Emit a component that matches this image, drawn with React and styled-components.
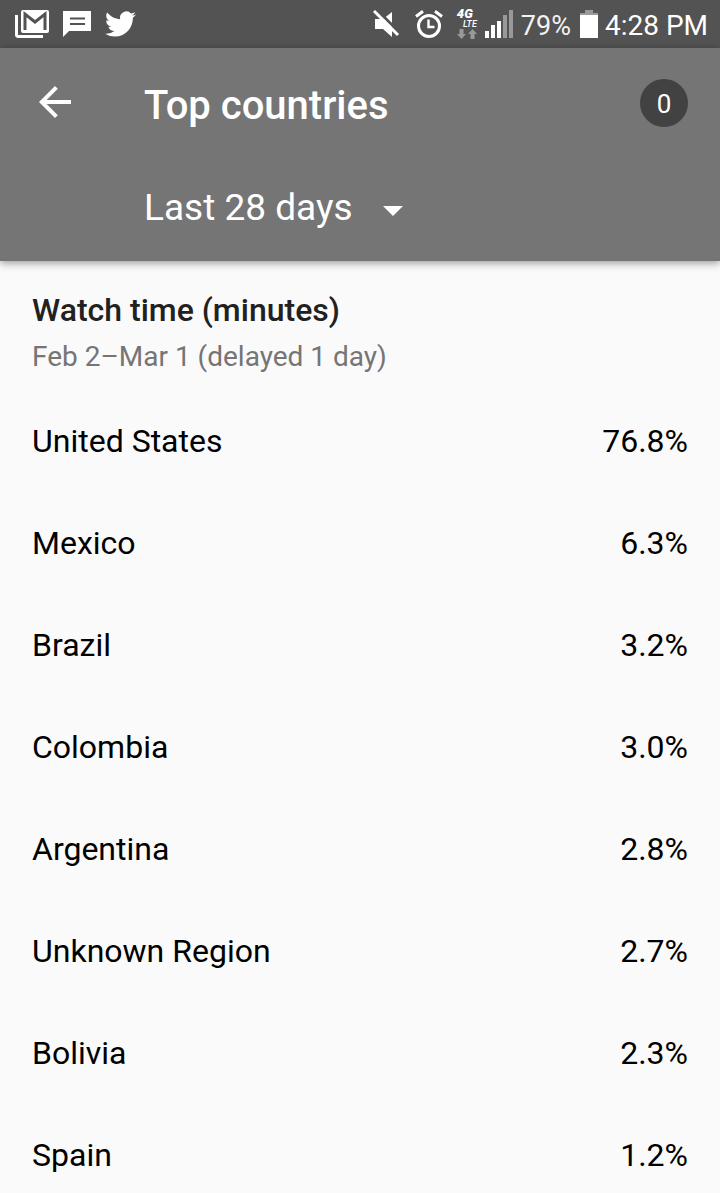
import React from 'react';
import styled, { createGlobalStyle } from 'styled-components'

const countries = [
    { name: 'United States', share: '76.8%' },
    { name: 'Mexico', share: '6.3%' },
    { name: 'Brazil', share: '3.2%' },
    { name: 'Colombia', share: '3.0%' },
    { name: 'Argentina', share: '2.8%' },
    { name: 'Unknown Region', share: '2.7%' },
    { name: 'Bolivia', share: '2.3%' },
    { name: 'Spain', share: '1.2%' },
]

const GmailIcon = () => (
    <svg width="34" height="28" viewBox="0 0 34 28">
        <path d="M1.5 5v20a1.5 1.5 0 0 0 1.5 1.5h25" fill="none" stroke="#fff" strokeWidth="3" />
        <rect x="6" y="0" width="28" height="23" rx="2" fill="#fff" />
        <path d="M10 20V4l10 8 10-8v16" fill="none" stroke="#535353" strokeWidth="3" />
    </svg>
)

const MessageIcon = () => (
    <svg width="28" height="26" viewBox="0 0 28 26">
        <path d="M0 0h28v20H6l-6 6z" fill="#fff" />
        <path d="M7 7.500h15M7 13h15" stroke="#535353" strokeWidth="2" />
    </svg>
)

const TwitterIcon = () => (
    <svg width="31" height="26" viewBox="0 2 24 20" fill="#fff">
        <path d="M23.953 4.57a10 10 0 01-2.825.775 4.958 4.958 0 002.163-2.723c-.951.555-2.005.959-3.127 1.184a4.92 4.92 0 00-8.384 4.482C7.69 8.095 4.067 6.13 1.64 3.162a4.822 4.822 0 00-.666 2.475c0 1.71.87 3.213 2.188 4.096a4.904 4.904 0 01-2.228-.616v.06a4.923 4.923 0 003.946 4.827 4.996 4.996 0 01-2.212.085 4.936 4.936 0 004.604 3.417 9.867 9.867 0 01-6.102 2.105c-.39 0-.779-.023-1.17-.067a13.995 13.995 0 007.557 2.209c9.053 0 13.998-7.496 13.998-13.985 0-.21 0-.42-.015-.63A9.935 9.935 0 0024 4.59z" />
    </svg>
)

const MuteIcon = () => (
    <svg width="28" height="28" viewBox="0 0 28 28">
        <path d="M2 9h8l9-7v25l-9-8H2z" fill="#fff" />
        <path d="M3 -1L28 24" stroke="#535353" strokeWidth="3" />
        <path d="M1 1L25 25" stroke="#fff" strokeWidth="3" />
    </svg>
)

const AlarmIcon = () => (
    <svg width="28" height="28" viewBox="0 0 28 28" fill="none" stroke="#fff">
        <circle cx="14" cy="16" r="10.5" strokeWidth="3" />
        <path d="M13.5 9.5v7.5h6" strokeWidth="2.4" />
        <path d="M1 6.5L8 1.2M27 6.5L20 1.2" strokeWidth="3" />
    </svg>
)

const DataArrows = () => (
    <svg width="20" height="10" viewBox="0 0 20 10" fill="#999">
        <path d="M2.5 0h4v5H9l-4.500 5L0 5h2.500z" />
        <path d="M13.500 10h4V5H20l-4.500-5L11 5h2.500z" />
    </svg>
)

const SignalIcon = () => (
    <svg width="28" height="28" viewBox="0 0 28 28">
        <path d="M0 21h4v7H0zM6 15h4v13H6zM12 11h4v17h-4z" fill="#fff" />
        <path d="M18 5h4v23h-4zM24 0h4v28h-4z" fill="#999" />
    </svg>
)

const BatteryIcon = () => (
    <svg width="18" height="28" viewBox="0 0 18 28">
        <path d="M5 0h8v3h5v2H0V3h5z" fill="#999" />
        <path d="M0 5h18v23H0z" fill="#fff" />
    </svg>
)

const BackIcon = () => (
    <svg width="48" height="48" viewBox="0 0 24 24" fill="#fff">
        <path d="M20 11H7.830l5.590-5.590L12 4l-8 8 8 8 1.410-1.410L7.830 13H20v-2z" />
    </svg>
)

const CaretIcon = () => (
    <svg width="20" height="16" viewBox="0 0 20 16" fill="#fff">
        <path d="M0 6h20L10 16z" />
    </svg>
)

function App() {
    return (
        <Screen>
            <GlobalStyle />
            <StatusBar>
                <Notifications>
                    <GmailIcon />
                    <MessageIcon />
                    <TwitterIcon />
                </Notifications>
                <Indicators>
                    <MuteIcon />
                    <AlarmIcon />
                    <Network>
                        <NetworkType>4G</NetworkType>
                        <NetworkMode>LTE</NetworkMode>
                        <DataArrows />
                    </Network>
                    <SignalIcon />
                </Indicators>
                <Percent>79%</Percent>
                <BatteryIcon />
                <Clock>4:28 PM</Clock>
            </StatusBar>
            <Header>
                <Toolbar>
                    <BackButton type="button" aria-label="Back"><BackIcon /></BackButton>
                    <Title>Top countries</Title>
                    <Badge type="button" aria-label="Notifications">0</Badge>
                </Toolbar>
                <Period>
                    <PeriodSelect aria-label="Period" defaultValue="28">
                        <option value="28">Last 28 days</option>
                    </PeriodSelect>
                    <CaretIcon />
                </Period>
            </Header>
            <Content>
                <Heading>Watch time (minutes)</Heading>
                <Range>Feb 2–Mar 1 (delayed 1 day)</Range>
                <Table aria-label="Watch time by country">
                    <tbody>
                        {countries.map((c) => (
                            <tr key={c.name}>
                                <Country scope="row">{c.name}</Country>
                                <Share>{c.share}</Share>
                            </tr>
                        ))}
                    </tbody>
                </Table>
            </Content>
        </Screen>
    )
}

export default App

const GlobalStyle = createGlobalStyle`
* {
    box-sizing: border-box;
}
body {
    margin: 0;
    background: #fafafa;
    font-family: Roboto, sans-serif;
}
svg {
    display: block;
    flex-shrink: 0;
}
`;

const Screen = styled.div`
display: flex;
flex-direction: column;
height: 100vh;
`;

const StatusBar = styled.div`
display: flex;
align-items: center;
flex-shrink: 0;
height: 48px;
padding: 0 12px 0 15px;
background: #535353;
color: #fff;
`;

const Notifications = styled.div`
display: flex;
align-items: center;
gap: 14px;
flex: 1;
`;

const Indicators = styled.div`
display: flex;
align-items: center;
gap: 14px;
& > svg:last-child {
    margin-left: -6px;
}
`;

const Network = styled.div`
display: flex;
flex-direction: column;
align-items: flex-start;
width: 20px;
padding-bottom: 1px;
`;

const NetworkType = styled.span`
font-size: 13px;
line-height: 12px;
font-weight: 900;
font-style: italic;
`;

const NetworkMode = styled.span`
align-self: flex-end;
font-size: 9px;
line-height: 9px;
font-weight: 500;
font-style: italic;
`;

const Percent = styled.span`
margin: 0 9px 0 8px;
padding-top: 3px;
font-size: 27px;
line-height: 40px;
color: #f2f2f2;
`;

const Clock = styled.span`
margin-left: 7px;
padding-top: 3px;
font-size: 28px;
line-height: 40px;
`;

const Header = styled.header`
position: relative;
flex-shrink: 0;
padding-bottom: 3px;
background: #757575;
color: #fff;
box-shadow: 0 2px 8px rgba(0, 0, 0, 0.4);
`;

const Toolbar = styled.div`
display: flex;
align-items: center;
height: 110px;
padding: 0 32px 0 16px;
`;

const BackButton = styled.button`
display: flex;
align-items: center;
justify-content: center;
width: 78px;
height: 80px;
padding: 0 0 2px;
border: 0;
background: none;
cursor: pointer;
`;

const Title = styled.h1`
flex: 1;
margin: 0 0 0 50px;
padding-top: 6px;
font-size: 40px;
line-height: 48px;
font-weight: 500;
`;

const Badge = styled.button`
width: 48px;
height: 48px;
padding: 2px 0 0;
border: 0;
border-radius: 50%;
background: #424242;
color: #fff;
font-family: inherit;
font-size: 26px;
line-height: 46px;
cursor: pointer;
`;

const Period = styled.div`
display: flex;
align-items: center;
height: 100px;
padding-left: 144px;
& > svg {
    margin-left: -20px;
    pointer-events: none;
}
`;

const PeriodSelect = styled.select`
appearance: none;
padding: 0 50px 0 0;
border: 0;
background: none;
color: #fff;
font-family: inherit;
font-size: 37px;
line-height: 48px;
cursor: pointer;
`;

const Content = styled.main`
flex: 1;
min-height: 0;
padding: 27px 32px 0;
overflow-y: auto;
scrollbar-width: none;
`;

const Heading = styled.h2`
margin: 0;
font-size: 32px;
line-height: 44px;
font-weight: 500;
color: #212121;
`;

const Range = styled.p`
margin: 5px 0 13px;
font-size: 28px;
line-height: 40px;
color: #757575;
`;

const Table = styled.table`
width: 100%;
border-collapse: collapse;
font-size: 32px;
line-height: 48px;
color: #000;
`;

const Country = styled.th`
height: 102px;
padding: 0;
font-weight: 400;
text-align: left;
`;

const Share = styled.td`
padding: 0;
text-align: right;
`;
